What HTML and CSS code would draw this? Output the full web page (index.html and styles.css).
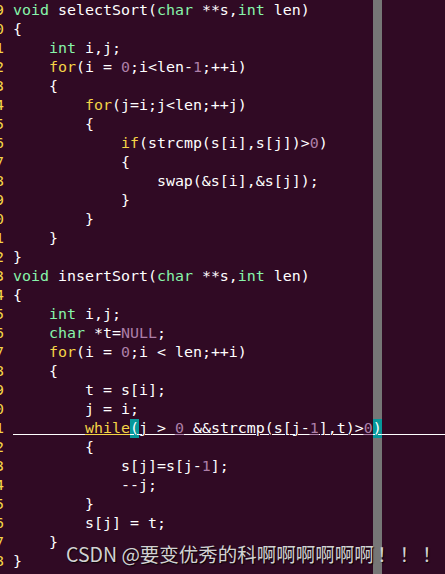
FILE: index.html
```html
<!DOCTYPE html>
<html>
<head>
<meta charset="utf-8">
<link rel="stylesheet" href="styles.css">
</head>
<body>
<div class="editor">
<div class="row"><span class="ln">9</span><span class="code"><span class="t">void</span> selectSort(<span class="t">char</span> **s,<span class="t">int</span> len)</span></div>
<div class="row"><span class="ln">0</span><span class="code">{</span></div>
<div class="row"><span class="ln">1</span><span class="code">    <span class="t">int</span> i,j;</span></div>
<div class="row"><span class="ln">2</span><span class="code">    <span class="k">for</span>(i = <span class="c">0</span>;i&lt;len-<span class="c">1</span>;++i)</span></div>
<div class="row"><span class="ln">3</span><span class="code">    {</span></div>
<div class="row"><span class="ln">4</span><span class="code">        <span class="k">for</span>(j=i;j&lt;len;++j)</span></div>
<div class="row"><span class="ln">5</span><span class="code">        {</span></div>
<div class="row"><span class="ln">6</span><span class="code">            <span class="k">if</span>(strcmp(s[i],s[j])&gt;<span class="c">0</span>)</span></div>
<div class="row"><span class="ln">7</span><span class="code">            {</span></div>
<div class="row"><span class="ln">8</span><span class="code">                swap(&amp;s[i],&amp;s[j]);</span></div>
<div class="row"><span class="ln">9</span><span class="code">            }</span></div>
<div class="row"><span class="ln">0</span><span class="code">        }</span></div>
<div class="row"><span class="ln">1</span><span class="code">    }</span></div>
<div class="row"><span class="ln">2</span><span class="code">}</span></div>
<div class="row"><span class="ln">3</span><span class="code"><span class="t">void</span> insertSort(<span class="t">char</span> **s,<span class="t">int</span> len)</span></div>
<div class="row"><span class="ln">4</span><span class="code">{</span></div>
<div class="row"><span class="ln">5</span><span class="code">    <span class="t">int</span> i,j;</span></div>
<div class="row"><span class="ln">6</span><span class="code">    <span class="t">char</span> *t=<span class="c">NULL</span>;</span></div>
<div class="row"><span class="ln">7</span><span class="code">    <span class="k">for</span>(i = <span class="c">0</span>;i &lt; len;++i)</span></div>
<div class="row"><span class="ln">8</span><span class="code">    {</span></div>
<div class="row"><span class="ln">9</span><span class="code">        t = s[i];</span></div>
<div class="row"><span class="ln">0</span><span class="code">        j = i;</span></div>
<div class="row cur"><span class="ln">1</span><span class="code"><span>        </span><span class="k">while</span><span class="mp">(</span><span>j &gt; </span><span class="c">0</span><span> &amp;&amp;strcmp(s[j-</span><span class="c">1</span><span>],t)&gt;</span><span class="c">0</span><span class="mp">)</span><span>        </span></span></div>
<div class="row"><span class="ln">2</span><span class="code">        {</span></div>
<div class="row"><span class="ln">3</span><span class="code">            s[j]=s[j-<span class="c">1</span>];</span></div>
<div class="row"><span class="ln">4</span><span class="code">            --j;</span></div>
<div class="row"><span class="ln">5</span><span class="code">        }</span></div>
<div class="row"><span class="ln">6</span><span class="code">        s[j] = t;</span></div>
<div class="row"><span class="ln">7</span><span class="code">    }</span></div>
<div class="row"><span class="ln">8</span><span class="code">}</span></div>
<div class="row last"><span class="ln">9</span><span class="code"><span class="t">int</span> main(<span class="t">void</span>)</span></div>
</div>
<div class="wm">CSDN @要变优秀的科啊啊啊啊啊啊<span class="bang">！！！</span></div>
</body>
</html>
```
FILE: styles.css
```css
html, body {
  margin: 0;
  padding: 0;
  height: 100%;
  overflow: hidden;
  background-color: #300a24;
}
body {
  background-image: linear-gradient(to right, transparent 373px, #767676 373px, #767676 382px, transparent 382px);
}
.editor {
  font-family: "DejaVu Sans Mono", monospace;
  font-size: 14.95px;
  line-height: 19px;
  color: #ffffff;
  padding-top: 1px;
}
.row {
  display: flex;
  height: 19px;
  white-space: pre;
}
.last {
  padding-top: 2px;
}
.ln {
  flex: none;
  width: 9px;
  margin-left: -5px;
  margin-right: 9px;
  text-align: right;
  color: #f5d547;
}
.code {
  flex: none;
}
.t { color: #87f5aa; }
.k { color: #f5d547; }
.c { color: #ad7fa8; }
.mp {
  display: inline-block;
  height: 19px;
  background: #06989a;
}
.cur .code span {
  text-decoration: underline;
  text-decoration-thickness: 1px;
  text-underline-offset: 1px;
}
.wm {
  position: absolute;
  left: 66px;
  top: 542px;
  font-family: "Noto Sans CJK SC", sans-serif;
  font-size: 19.5px;
  line-height: 24px;
  color: #d2d2d2;
  text-shadow: 1px 1px 1px rgba(0, 0, 0, 0.85);
  white-space: nowrap;
}
.bang {
  margin-left: 3px;
  letter-spacing: 3px;
}
```
